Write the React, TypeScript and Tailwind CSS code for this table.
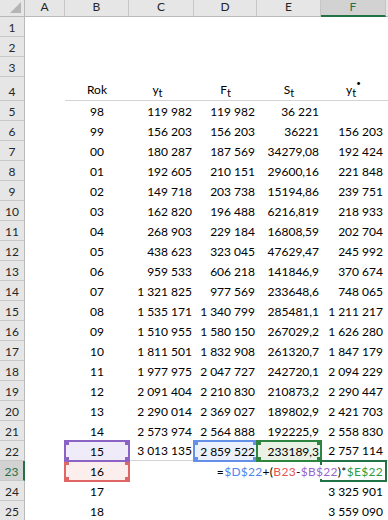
import React from 'react';

const rows: string[][] = [
  ['98', '119 982', '119 982', '36 221', ''],
  ['99', '156 203', '156 203', '36221', '156 203'],
  ['00', '180 287', '187 569', '34279,08', '192 424'],
  ['01', '192 605', '210 151', '29600,16', '221 848'],
  ['02', '149 718', '203 738', '15194,86', '239 751'],
  ['03', '162 820', '196 488', '6216,819', '218 933'],
  ['04', '268 903', '229 184', '16808,59', '202 704'],
  ['05', '438 623', '323 045', '47629,47', '245 992'],
  ['06', '959 533', '606 218', '141846,9', '370 674'],
  ['07', '1 321 825', '977 569', '233648,6', '748 065'],
  ['08', '1 535 171', '1 340 799', '285481,1', '1 211 217'],
  ['09', '1 510 955', '1 580 150', '267029,2', '1 626 280'],
  ['10', '1 811 501', '1 832 908', '261320,7', '1 847 179'],
  ['11', '1 977 975', '2 047 727', '242720,1', '2 094 229'],
  ['12', '2 091 404', '2 210 830', '210873,2', '2 290 447'],
  ['13', '2 290 014', '2 369 027', '189802,9', '2 421 703'],
  ['14', '2 573 974', '2 564 888', '192225,9', '2 558 830'],
  ['15', '3 013 135', '2 859 522', '233189,3', '2 757 114'],
  ['16', '', '', '', ''],
  ['17', '', '', '', '3 325 901'],
  ['18', '', '', '', '3 559 090'],
];

const cellBase = 'flex items-end whitespace-nowrap text-[12px] leading-[14px] pb-[2px]';
const hdrCol =
  'flex items-end justify-center pb-[2px] text-[12px] leading-[14px] bg-[#e6e6e6] border-r border-b border-r-[#c6c6c6] border-b-[#b9b9b9] text-[#262626]';
const hdrRow =
  'flex items-end justify-center pb-[1px] text-[12px] leading-[14px] bg-[#e6e6e6] border-r border-b border-r-[#b9b9b9] border-b-[#c8c8c8] text-[#262626]';

function Handles({ cls }: { cls: string }) {
  return (
    <>
      <span className={`absolute -top-[2px] -left-[2px] w-[5px] h-[5px] ${cls}`} />
      <span className={`absolute -top-[2px] -right-[2px] w-[5px] h-[5px] ${cls}`} />
      <span className={`absolute -bottom-[2px] -left-[2px] w-[5px] h-[5px] ${cls}`} />
      <span className={`absolute -bottom-[2px] -right-[2px] w-[5px] h-[5px] ${cls}`} />
    </>
  );
}

function Sub({ children }: { children: React.ReactNode }) {
  return <span className="relative top-[3px] text-[11px]">{children}</span>;
}

export default function App() {
  const body: React.ReactNode[] = [];

  // rows 1-3
  for (let r = 1; r <= 3; r++) {
    body.push(
      <div key={`h${r}`} className={hdrRow}>
        {r}
      </div>
    );
    for (let c = 0; c < 7; c++) body.push(<div key={`e${r}-${c}`} />);
  }

  // row 4 (table header)
  body.push(
    <div key="h4" className={hdrRow}>
      4
    </div>
  );
  body.push(<div key="a4" />);
  const h4 = 'flex items-end justify-center pb-[3px] whitespace-nowrap text-[12px] leading-[14px] border-b border-[#d4d4d4]';
  body.push(
    <div key="b4" className={h4}>
      Rok
    </div>
  );
  body.push(
    <div key="c4" className={`${h4} pr-[8px]`}>
      <span>y</span>
      <Sub>t</Sub>
    </div>
  );
  body.push(
    <div key="d4" className={h4}>
      <span>F</span>
      <Sub>t</Sub>
    </div>
  );
  body.push(
    <div key="e4" className={h4}>
      <span>S</span>
      <Sub>t</Sub>
    </div>
  );
  body.push(
    <div key="f4" className={h4}>
      <span>y</span>
      <Sub>t</Sub>
      <span className="relative -top-[10px] text-[8px] leading-[8px]">•</span>
    </div>
  );
  body.push(<div key="g4" className="border-b border-[#d4d4d4]" />);

  rows.forEach((row, i) => {
    const n = i + 5;
    const [b, c, d, e, f] = row;
    const is22 = n === 22;
    const is23 = n === 23;
    const line = is22 ? ' border-b border-[#d4d4d4]' : '';
    body.push(
      <div
        key={`h${n}`}
        className={
          is23
            ? 'flex items-end justify-center pb-[1px] text-[12px] leading-[14px] bg-[#d2d2d2] border-r-2 border-b border-r-[#217346] border-b-[#c8c8c8] text-[#217346]'
            : hdrRow
        }
      >
        {n}
      </div>
    );
    body.push(<div key={`a${n}`} />);
    // B
    if (is22) {
      body.push(
        <div key={`b${n}`} className={`${cellBase} justify-center relative bg-[#f0ebf8]`}>
          {b}
          <div className="absolute -inset-px border-2 border-[#8a63c4] z-20">
            <Handles cls="bg-[#8a63c4]" />
          </div>
        </div>
      );
    } else if (is23) {
      body.push(
        <div key={`b${n}`} className={`${cellBase} justify-center relative bg-[#fdeeee]`}>
          {b}
          <div className="absolute -inset-px border-2 border-[#e06666] z-10">
            <Handles cls="bg-[#e06666]" />
          </div>
        </div>
      );
    } else {
      body.push(
        <div key={`b${n}`} className={`${cellBase} justify-center`}>
          {b}
        </div>
      );
    }
    // C
    body.push(
      <div key={`c${n}`} className={`${cellBase} justify-end pr-[2px]${line}`}>
        {c}
      </div>
    );
    // D
    if (is22) {
      body.push(
        <div key={`d${n}`} className={`${cellBase} justify-end pr-[2px] relative bg-[#ebf1fc]`}>
          {d}
          <div className="absolute -inset-px border-2 border-[#6490e8] z-10">
            <Handles cls="bg-[#6490e8]" />
          </div>
        </div>
      );
    } else {
      body.push(
        <div key={`d${n}`} className={`${cellBase} justify-end pr-[2px]`}>
          {d}
        </div>
      );
    }
    // E
    if (is22) {
      body.push(
        <div key={`e${n}`} className={`${cellBase} justify-end pr-[2px] relative bg-[#eaf2e6]`}>
          {e}
          <div className="absolute -inset-px border-2 border-[#2e8540] z-20">
            <Handles cls="bg-[#2e8540]" />
          </div>
        </div>
      );
    } else {
      body.push(
        <div key={`e${n}`} className={`${cellBase} justify-end pr-[2px]`}>
          {e}
        </div>
      );
    }
    // F
    if (is23) {
      body.push(
        <div key={`f${n}`} className={`${cellBase} justify-end pr-[3px] relative`}>
          <div className="absolute -inset-px border-2 border-[#217346] z-30" />
          <span className="absolute right-[3px] bottom-[2px] bg-white z-40 whitespace-nowrap tracking-[0.3px]">
            <span>=</span>
            <span className="text-[#4f86ec]">$D$22</span>
            <span>+(</span>
            <span className="text-[#e05555]">B23</span>
            <span>-</span>
            <span className="text-[#9966cc]">$B$22</span>
            <span>)*</span>
            <span className="text-[#2e9e40]">$E$22</span>
          </span>
        </div>
      );
    } else {
      body.push(
        <div key={`f${n}`} className={`${cellBase} justify-end pr-[3px]${line}`}>
          {f}
        </div>
      );
    }
    body.push(<div key={`g${n}`} className={line.trim()} />);
  });

  return (
    <div className="w-[388px] h-[520px] overflow-hidden bg-white text-black font-['Lato','Liberation_Sans',sans-serif]">
      <div className="grid grid-cols-[25px_40px_64px_65px_63px_64px_65px_1fr] grid-rows-[17px_20px_20px_20px_24px_repeat(21,20px)]">
        {/* header row */}
        <div className="relative bg-[#e6e6e6] border-r border-b border-[#b9b9b9]">
          <svg className="absolute right-[3px] bottom-[3px]" width="11" height="11" viewBox="0 0 11 11">
            <polygon points="11,0 11,11 0,11" fill="#b5b5b5" />
          </svg>
        </div>
        <div className={hdrCol}>A</div>
        <div className={hdrCol}>B</div>
        <div className={hdrCol}>C</div>
        <div className={hdrCol}>D</div>
        <div className={hdrCol}>E</div>
        <div className="flex items-end justify-center pb-[1px] text-[12px] leading-[14px] bg-[#d2d2d2] border-r border-b-2 border-r-[#c6c6c6] border-b-[#217346] text-[#217346]">
          F
        </div>
        <div className="bg-[#e6e6e6] border-b border-[#b9b9b9]" />
        {body}
      </div>
    </div>
  );
}
